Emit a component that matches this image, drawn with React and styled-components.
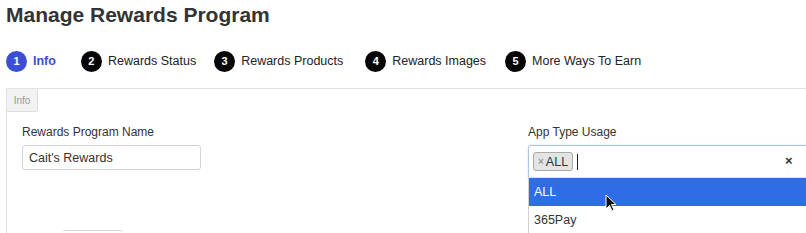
import React from "react";
import styled, { createGlobalStyle } from "styled-components";

const Global = createGlobalStyle`
  html, body { margin: 0; padding: 0; background: #fff; overflow: hidden; }
  body { font-family: "Liberation Sans", Arial, Helvetica, sans-serif; color: #333; }
`;

const Page = styled.div`
  width: 806px;
  height: 233px;
  overflow: hidden;
  position: relative;
  padding: 0 0 0 6px;
  box-sizing: border-box;
`;

const Title = styled.h1`
  margin: 0;
  padding-top: 3px;
  font-size: 21px;
  font-weight: 700;
  color: #333;
  line-height: 24px;
`;

const Steps = styled.div`
  display: flex;
  align-items: center;
  margin-top: 23px;
  height: 22px;
`;

const Step = styled.div`
  display: flex;
  align-items: center;
  gap: 6px;
  margin-right: ${(p) => p.$mr}px;
`;

const Circle = styled.span`
  width: 21px;
  height: 21px;
  border-radius: 50%;
  background: ${(p) => (p.$active ? "#3a4fd6" : "#050505")};
  color: #fff;
  font-size: 11px;
  font-weight: 700;
  display: flex;
  align-items: center;
  justify-content: center;
`;

const StepLabel = styled.span`
  font-size: 12.5px;
  color: ${(p) => (p.$active ? "#3a4fd6" : "#222")};
  font-weight: ${(p) => (p.$active ? 700 : 400)};
`;

const Panel = styled.div`
  margin-top: 16px;
  border-top: 1px solid #e3e3e3;
  border-left: 1px solid #e3e3e3;
  height: 200px;
  position: relative;
`;

const Tab = styled.div`
  width: 31px;
  height: 23px;
  background: #f2f2f2;
  border-right: 1px solid #ddd;
  border-bottom: 1px solid #ddd;
  border-radius: 0 0 3px 0;
  font-size: 10px;
  color: #999;
  display: flex;
  align-items: center;
  justify-content: center;
  box-sizing: border-box;
`;

const Fields = styled.div`
  display: grid;
  grid-template-columns: 506px 1fr;
  padding: 13px 0 0 15px;
`;

const Field = styled.div`
  display: flex;
  flex-direction: column;
`;

const Label = styled.label`
  font-size: 12px;
  color: #333;
  height: 15px;
  margin-bottom: 5px;
`;

const TextInput = styled.div`
  width: 179px;
  height: 25px;
  box-sizing: border-box;
  border: 1px solid #d4d4d4;
  border-radius: 3px;
  font-size: 12.5px;
  color: #333;
  padding-left: 6px;
  display: flex;
  align-items: center;
`;

const Select = styled.div`
  position: relative;
  width: 290px;
`;

const SelectBox = styled.div`
  height: 33px;
  box-sizing: border-box;
  border: 1px solid #a9c6ea;
  border-bottom-color: #d6e3f2;
  border-radius: 3px 3px 0 0;
  box-shadow: 0 0 2px rgba(100, 150, 220, 0.35);
  display: flex;
  align-items: center;
  padding-left: 4px;
  gap: 4px;
`;

const Tag = styled.span`
  height: 19px;
  box-sizing: border-box;
  background: #e4e4e4;
  border: 1px solid #aaa;
  border-radius: 3px;
  font-size: 12.5px;
  color: #333;
  display: flex;
  align-items: center;
  padding: 0 4px 0 4px;
  gap: 2px;
`;

const TagX = styled.span`
  color: #999;
  font-size: 10px;
  font-weight: 700;
`;

const Caret = styled.span`
  width: 1px;
  height: 16px;
  background: #222;
`;

const Clear = styled.span`
  position: absolute;
  left: 257px;
  top: 8px;
  font-size: 13px;
  font-weight: 700;
  color: #333;
`;

const Options = styled.ul`
  list-style: none;
  margin: 0;
  padding: 0;
  border-left: 1px solid #d0d0d0;
`;

const Option = styled.li`
  height: 28px;
  display: flex;
  align-items: center;
  padding-left: 5px;
  font-size: 12.5px;
  background: ${(p) => (p.$hl ? "#2f6ce6" : "#fff")};
  color: ${(p) => (p.$hl ? "#fff" : "#333")};
`;

const Pointer = styled.svg`
  position: absolute;
  left: 77px;
  top: 49px;
`;

const BottomBtn = styled.div`
  width: 60px;
  height: 10px;
  margin: 60px 0 0 41px;
  border-top: 1px solid #d8d8d8;
  border-radius: 3px 3px 0 0;
`;

const steps = [
  { n: 1, label: "Info", mr: 25 },
  { n: 2, label: "Rewards Status", mr: 18 },
  { n: 3, label: "Rewards Products", mr: 22 },
  { n: 4, label: "Rewards Images", mr: 19 },
  { n: 5, label: "More Ways To Earn", mr: 0 },
];

export default function App() {
  return (
    <>
      <Global />
      <Page>
        <Title>Manage Rewards Program</Title>
        <Steps>
          {steps.map((s) => (
            <Step key={s.n} $mr={s.mr}>
              <Circle $active={s.n === 1}>{s.n}</Circle>
              <StepLabel $active={s.n === 1}>{s.label}</StepLabel>
            </Step>
          ))}
        </Steps>
        <Panel>
          <Tab>Info</Tab>
          <Fields>
            <Field>
              <Label>Rewards Program Name</Label>
              <TextInput>Cait's Rewards</TextInput>
              <BottomBtn />
            </Field>
            <Field>
              <Label>App Type Usage</Label>
              <Select>
                <SelectBox>
                  <Tag>
                    <TagX>×</TagX>ALL
                  </Tag>
                  <Caret />
                </SelectBox>
                <Clear>×</Clear>
                <Options>
                  <Option $hl>ALL</Option>
                  <Option>365Pay</Option>
                </Options>
                <Pointer width="12" height="18" viewBox="0 0 12 18">
                  <path d="M1 1 L1 15 L4.5 11.5 L7 17 L9 16 L6.5 10.5 L11 10.5 Z" fill="#111" stroke="#fff" strokeWidth="1" />
                </Pointer>
              </Select>
            </Field>
          </Fields>
        </Panel>
      </Page>
    </>
  );
}
